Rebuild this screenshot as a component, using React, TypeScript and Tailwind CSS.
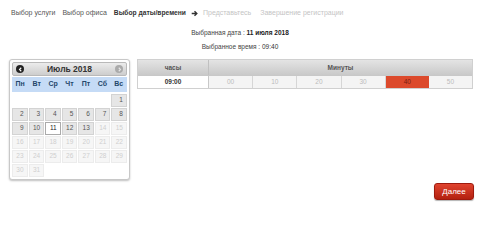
import React from "react";

const STEPS = [
  { label: "Выбор услуги", state: "done" },
  { label: "Выбор офиса", state: "done" },
  { label: "Выбор даты/времени", state: "active" },
  { label: "Представьтесь", state: "next" },
  { label: "Завершение регистрации", state: "next" },
];

const DAY_NAMES = ["Пн", "Вт", "Ср", "Чт", "Пт", "Сб", "Вс"];

// July 2018 starts on Sunday
const WEEKS: (number | null)[][] = [
  [null, null, null, null, null, null, 1],
  [2, 3, 4, 5, 6, 7, 8],
  [9, 10, 11, 12, 13, 14, 15],
  [16, 17, 18, 19, 20, 21, 22],
  [23, 24, 25, 26, 27, 28, 29],
  [30, 31, null, null, null, null, null],
];

const MINUTES = ["00", "10", "20", "30", "40", "50"];

function Calendar() {
  return (
    <div className="mt-[2px] w-[121px] shrink-0 rounded-[3px] border border-[#c8c8c8] bg-white p-[2px] shadow-[0_1px_2px_rgba(0,0,0,0.25)]">
      <div className="flex h-[14px] items-center justify-between rounded-[2px] border border-[#b9b9b9] bg-gradient-to-b from-[#ececec] to-[#cdcdcd] px-[3px]">
        <span className="flex h-[8px] w-[8px] items-center justify-center rounded-full bg-[#222]">
          <svg width="5" height="5" viewBox="0 0 10 10">
            <path d="M6.5 1.5 L3 5 L6.5 8.5" stroke="#fff" strokeWidth="2.2" fill="none" />
          </svg>
        </span>
        <span className="text-[8.5px] font-bold text-[#333]">Июль 2018</span>
        <span className="flex h-[8px] w-[8px] items-center justify-center rounded-full bg-[#aaa]">
          <svg width="5" height="5" viewBox="0 0 10 10">
            <path d="M3.5 1.5 L7 5 L3.5 8.5" stroke="#e6e6e6" strokeWidth="2.2" fill="none" />
          </svg>
        </span>
      </div>
      <div className="mt-[1px] grid h-[15px] grid-cols-7 items-center bg-[#c5dbf6] text-center text-[7px] font-bold text-[#24476b]">
        {DAY_NAMES.map((d) => (
          <span key={d}>{d}</span>
        ))}
      </div>
      <div className="mt-[2px] flex flex-col gap-[1px]">
        {WEEKS.map((week, wi) => (
          <div key={wi} className="grid h-[13px] grid-cols-7 gap-[1px]">
            {week.map((day, di) => {
              if (day === null) return <span key={di} />;
              let cls = "border-[#ececec] bg-[#f6f6f6] text-[#cfcfcf]";
              if (day <= 13) cls = "border-[#d3d3d3] bg-[#e6e6e6] text-[#555]";
              if (day === 11) cls = "border-[#aaa] bg-white text-[#222]";
              return (
                <span
                  key={di}
                  className={`flex items-center justify-end border pr-[3px] text-[6.5px] leading-none ${cls}`}
                >
                  {day}
                </span>
              );
            })}
          </div>
        ))}
      </div>
    </div>
  );
}

function TimeTable() {
  return (
    <div className="mt-[2px] flex-1 border border-[#d0d0d0] text-[6.5px]">
      <div className="flex h-[16px] border-b border-[#c8c8c8] bg-gradient-to-b from-[#e4e4e4] to-[#c9c9c9] font-bold text-[#555]">
        <div className="flex w-[71px] items-center justify-center border-r border-[#c0c0c0]">часы</div>
        <div className="flex flex-1 items-center justify-center">Минуты</div>
      </div>
      <div className="flex h-[12px]">
        <div className="flex w-[71px] items-center justify-center border-r border-[#c8c8c8] bg-white font-bold text-[#333]">
          09:00
        </div>
        {MINUTES.map((m) =>
          m === "40" ? (
            <div key={m} className="flex flex-1 items-center justify-center bg-[#dc4a2c] text-[#7a1e10]">
              {m}
            </div>
          ) : (
            <div
              key={m}
              className="flex flex-1 items-center justify-center border-r border-[#d6d6d6] bg-[#f4f4f4] text-[#bcbcbc] last:border-r-0"
            >
              {m}
            </div>
          )
        )}
      </div>
    </div>
  );
}

export default function App() {
  return (
    <div className="h-[205px] w-[480px] bg-white font-['Liberation_Sans',Arial,sans-serif]">
      {/* Steps */}
      <div className="flex items-center pl-[11px] pt-[8px] text-[7px] leading-[10px]">
        <span className="text-[#555]">{STEPS[0].label}</span>
        <span className="ml-[7px] text-[#555]">{STEPS[1].label}</span>
        <span className="ml-[7px] text-[6.7px] font-bold text-[#333]">{STEPS[2].label}</span>
        <svg className="ml-[5px]" width="7" height="7" viewBox="0 0 10 10">
          <path d="M1 5 H8 M5 1.8 L8.3 5 L5 8.2" stroke="#333" strokeWidth="2" fill="none" />
        </svg>
        <span className="ml-[5px] text-[#c4c4c4]">{STEPS[3].label}</span>
        <span className="ml-[9px] text-[#c4c4c4]">{STEPS[4].label}</span>
      </div>

      {/* Selected info */}
      <div className="mt-[10px] flex flex-col items-center text-[6.5px] text-[#444]">
        <div className="h-[14px] leading-[10px]">
          Выбранная дата : <span className="font-bold text-[#222]">11 июля 2018</span>
        </div>
        <div className="h-[12px] leading-[10px]">
          Выбранное время : <span className="text-[#333]">09:40</span>
        </div>
      </div>

      {/* Calendar + time table */}
      <div className="mt-[3px] flex items-start gap-[7px] pl-[9px] pr-[7px]">
        <Calendar />
        <TimeTable />
      </div>

      {/* Next button */}
      <div className="flex justify-end pr-[6px] pt-[3px]">
        <button className="h-[17px] w-[40px] rounded-[3px] border border-[#9e1a0e] bg-gradient-to-b from-[#e0432e] to-[#b3200f] text-[8px] text-white shadow-[0_1px_1px_rgba(0,0,0,0.3)]">
          Далее
        </button>
      </div>
    </div>
  );
}
